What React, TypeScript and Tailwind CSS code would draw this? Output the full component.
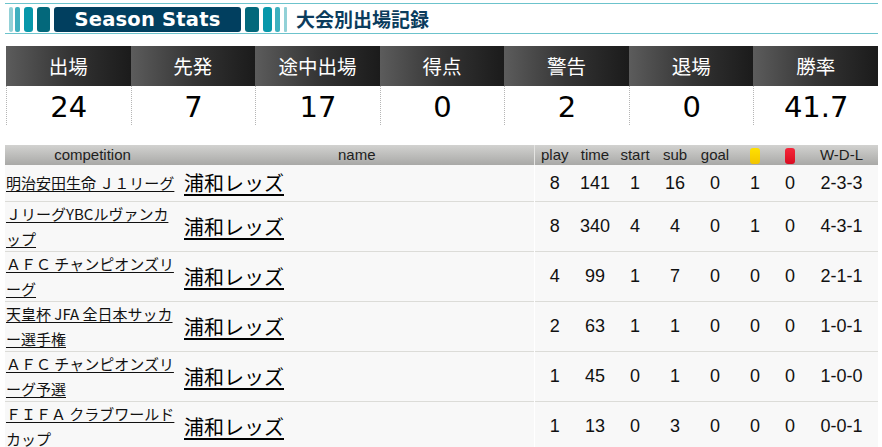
import React from 'react';

type Row = {
    comp: string[];
    team: string;
    play: number;
    time: number;
    start: number;
    sub: number;
    goal: number;
    yellow: number;
    red: number;
    wdl: string;
};

const summary = [
    { label: '出場', value: '24' },
    { label: '先発', value: '7' },
    { label: '途中出場', value: '17' },
    { label: '得点', value: '0' },
    { label: '警告', value: '2' },
    { label: '退場', value: '0' },
    { label: '勝率', value: '41.7' },
];

// lines are split where the site wraps them
const rows: Row[] = [
    { comp: ['明治安田生命 Ｊ１リーグ'], team: '浦和レッズ', play: 8, time: 141, start: 1, sub: 16, goal: 0, yellow: 1, red: 0, wdl: '2-3-3' },
    { comp: ['ＪリーグYBCルヴァンカ', 'ップ'], team: '浦和レッズ', play: 8, time: 340, start: 4, sub: 4, goal: 0, yellow: 1, red: 0, wdl: '4-3-1' },
    { comp: ['ＡＦＣ チャンピオンズリ', 'ーグ'], team: '浦和レッズ', play: 4, time: 99, start: 1, sub: 7, goal: 0, yellow: 0, red: 0, wdl: '2-1-1' },
    { comp: ['天皇杯 JFA 全日本サッカ', 'ー選手権'], team: '浦和レッズ', play: 2, time: 63, start: 1, sub: 1, goal: 0, yellow: 0, red: 0, wdl: '1-0-1' },
    { comp: ['ＡＦＣ チャンピオンズリ', 'ーグ予選'], team: '浦和レッズ', play: 1, time: 45, start: 0, sub: 1, goal: 0, yellow: 0, red: 0, wdl: '1-0-0' },
    { comp: ['ＦＩＦＡ クラブワールド', 'カップ'], team: '浦和レッズ', play: 1, time: 13, start: 0, sub: 3, goal: 0, yellow: 0, red: 0, wdl: '0-0-1' },
];

const jp = "font-['Noto_Sans_CJK_JP',sans-serif]";
const num = "font-['Liberation_Sans',Arial,sans-serif]";

const SectionTitle = () => (
    <div className="mt-[3px] h-[31px] border-y border-[#6cc3cc] flex items-start pt-[3px]">
        <span className="ml-[4px] w-[4px] h-[25px] rounded-[2px] bg-[#92d1d7]" />
        <span className="ml-[2px] w-[5px] h-[25px] rounded-[2px] bg-[#3eb0bf]" />
        <span className="ml-[4px] w-[9px] h-[25px] rounded-[3px] bg-[#0797aa]" />
        <span className="ml-[4px] w-[13px] h-[25px] rounded-[3px] bg-[#03687b]" />
        <div className="ml-[4px] w-[187px] h-[25px] rounded-[3px] bg-[#013f5f] flex items-center justify-center">
            <span className="text-white text-[19.5px] font-bold leading-none tracking-[0.2px] font-['DejaVu_Sans',Verdana,sans-serif]">Season Stats</span>
        </div>
        <span className="ml-[4px] w-[14px] h-[25px] rounded-[3px] bg-[#03687b]" />
        <span className="ml-[4px] w-[9px] h-[25px] rounded-[3px] bg-[#0797aa]" />
        <span className="ml-[3px] w-[5px] h-[25px] rounded-[2px] bg-[#3eb0bf]" />
        <span className="ml-[4px] w-[3px] h-[25px] rounded-[1px] bg-[#92d1d7]" />
        <h2 className={`ml-[9px] h-[25px] flex items-center text-[19px] font-bold text-[#0b3c5d] ${jp}`}>大会別出場記録</h2>
    </div>
);

const SummaryBoard = () => (
    <div className="mt-[12px] ml-[1px] grid grid-cols-7">
        {summary.map(s => (
            <div key={s.label} className="flex flex-col">
                <div className={`h-[40px] flex items-center justify-center bg-linear-to-r from-[#5c5c5c] via-[#353535] to-[#1b1b1b] text-white text-[19.5px] ${jp}`}>
                    {s.label}
                </div>
                <div className="h-[39px] pt-[4px] flex items-center justify-center border-l border-dotted border-[#b5b5b5] text-[29px] text-black font-['DejaVu_Sans',Verdana,sans-serif]">
                    {s.value}
                </div>
            </div>
        ))}
    </div>
);

const Card = ({ color }: { color: string }) => (
    <span className={`inline-block align-middle w-[10px] h-[16px] rounded-[3px] ${color}`} />
);

export default function App() {
    return (
        <div className="w-[882px] min-h-[447px] bg-white pl-[5px] pr-[4px] overflow-hidden">
            <SectionTitle />
            <SummaryBoard />

            <table className="mt-[20px] w-full table-fixed border-collapse">
                <colgroup>
                    <col className="w-[175px]" />
                    <col className="w-[354px]" />
                    <col className="w-[41px]" />
                    <col className="w-[40px]" />
                    <col className="w-[40px]" />
                    <col className="w-[40px]" />
                    <col className="w-[40px]" />
                    <col className="w-[40px]" />
                    <col className="w-[30px]" />
                    <col className="w-[73px]" />
                </colgroup>
                <thead>
                    <tr className={`h-[20px] bg-linear-to-b from-[#d2d2d0] to-[#a9a9a7] text-[15px] text-[#1e1e1e] ${num}`}>
                        <th className="font-normal leading-[20px] p-0">competition</th>
                        <th className="font-normal leading-[20px] p-0">name</th>
                        <th className="font-normal leading-[20px] p-0 border-l border-[#e4e4e2]">play</th>
                        <th className="font-normal leading-[20px] p-0">time</th>
                        <th className="font-normal leading-[20px] p-0">start</th>
                        <th className="font-normal leading-[20px] p-0">sub</th>
                        <th className="font-normal leading-[20px] p-0">goal</th>
                        <th className="font-normal leading-[20px] p-0"><Card color="bg-linear-to-b from-[#ffe100] to-[#f2c400]" /></th>
                        <th className="font-normal leading-[20px] p-0"><Card color="bg-linear-to-b from-[#f5263a] to-[#d90a20]" /></th>
                        <th className="font-normal leading-[20px] p-0">W-D-L</th>
                    </tr>
                </thead>
                <tbody>
                    {rows.map((r, i) => (
                        <tr key={i} className={`bg-[#f8f8f8] border-b border-[#dcdcd8] text-[18px] text-[#111] ${num}`}>
                            <td className={`pl-[1px] pr-0 py-0 text-[15px] leading-[24.5px] whitespace-nowrap ${jp}`}>
                                <a href="#" className="underline underline-offset-2 text-[#111]">
                                    {r.comp.map((line, j) => (
                                        <React.Fragment key={j}>{j > 0 && <br />}{line}</React.Fragment>
                                    ))}
                                </a>
                            </td>
                            <td className={`pl-[4px] py-0 text-[20px] leading-[36px] ${jp}`}>
                                <a href="#" className="underline underline-offset-[3px] text-black">{r.team}</a>
                            </td>
                            <td className="text-center p-0 border-l border-white">{r.play}</td>
                            <td className="text-center p-0">{r.time}</td>
                            <td className="text-center p-0">{r.start}</td>
                            <td className="text-center p-0">{r.sub}</td>
                            <td className="text-center p-0">{r.goal}</td>
                            <td className="text-center p-0">{r.yellow}</td>
                            <td className="text-center p-0">{r.red}</td>
                            <td className="text-center p-0">{r.wdl}</td>
                        </tr>
                    ))}
                </tbody>
            </table>
        </div>
    );
}
